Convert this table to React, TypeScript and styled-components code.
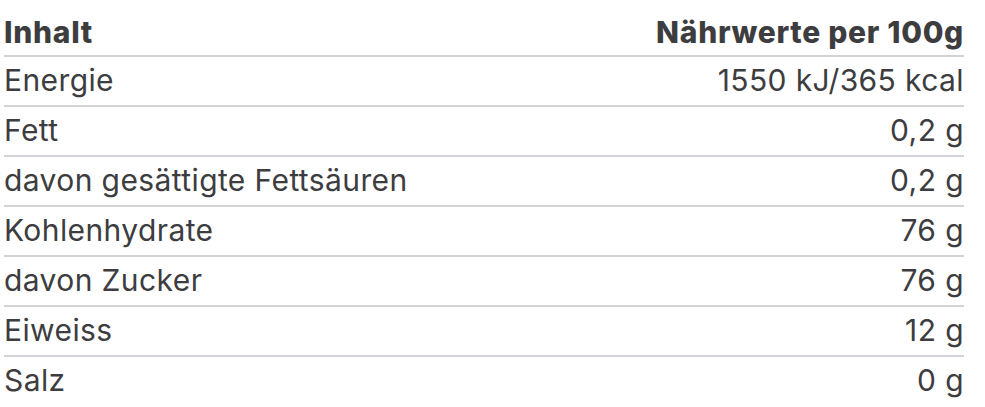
import styled, { createGlobalStyle } from 'styled-components';

const GlobalStyle = createGlobalStyle`
  body {
    margin: 0;
    background: #ffffff;
  }
`;

const Table = styled.table`
  width: 960px;
  margin-left: 4px;
  border-collapse: collapse;
  font-family: Inter, 'Liberation Sans', sans-serif;
  color: #3d3d3f;
`;

const HeadCell = styled.th<{ $right?: boolean }>`
  padding: 14px 0 5px;
  font-size: 30px;
  line-height: 36px;
  font-weight: 800;
  letter-spacing: 0.7px;
  text-align: ${(p) => (p.$right ? 'right' : 'left')};
  border-bottom: 2px solid #d2d2d7;
`;

const Row = styled.tr`
  & + & td {
    border-top: 2px solid #d2d2d7;
  }
`;

const Cell = styled.td<{ $right?: boolean }>`
  padding: 5px 0 7px;
  font-size: 30px;
  line-height: 36px;
  font-weight: 400;
  letter-spacing: 0.4px;
  text-align: ${(p) => (p.$right ? 'right' : 'left')};
  white-space: nowrap;
`;

const rows: [string, string][] = [
  ['Energie', '1550 kJ/365 kcal'],
  ['Fett', '0,2 g'],
  ['davon gesättigte Fettsäuren', '0,2 g'],
  ['Kohlenhydrate', '76 g'],
  ['davon Zucker', '76 g'],
  ['Eiweiss', '12 g'],
  ['Salz', '0 g'],
];

export default function App() {
  return (
    <>
      <GlobalStyle />
      <Table>
        <thead>
          <tr>
            <HeadCell>Inhalt</HeadCell>
            <HeadCell $right>Nährwerte per 100g</HeadCell>
          </tr>
        </thead>
        <tbody>
          {rows.map(([label, value]) => (
            <Row key={label}>
              <Cell>{label}</Cell>
              <Cell $right>{value}</Cell>
            </Row>
          ))}
        </tbody>
      </Table>
    </>
  );
}
